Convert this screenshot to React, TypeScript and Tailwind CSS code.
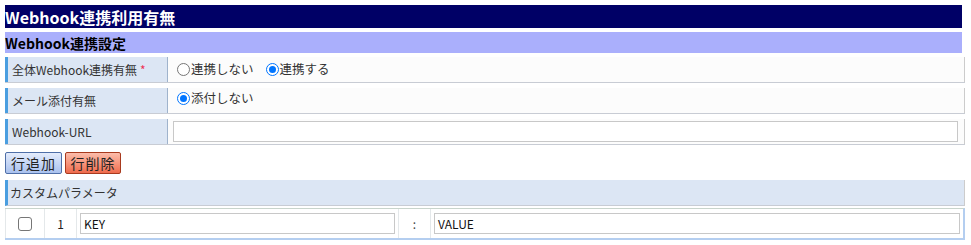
import React from "react";

const font = { fontFamily: '"Noto Sans CJK JP", "Noto Sans", sans-serif' };

function Radio({ checked }: { checked: boolean }) {
  return checked ? (
    <span className="inline-block w-[13px] h-[13px] rounded-full border border-[#0075ff] bg-white relative mr-[1px]">
      <span className="absolute left-[2px] top-[2px] w-[7px] h-[7px] rounded-full bg-[#0075ff]" />
    </span>
  ) : (
    <span className="inline-block w-[13px] h-[13px] rounded-full border border-[#767676] bg-white mr-[1px]" />
  );
}

function Label({ children }: { children: React.ReactNode }) {
  return (
    <div className="w-[163px] shrink-0 bg-[#dce6f4] border-l-[3px] border-l-[#4a9ee0] border-r border-r-[#9fb3cc] flex items-center pl-[4px] text-[12px] text-[#333]">
      {children}
    </div>
  );
}

export default function App() {
  return (
    <div className="w-[971px] h-[245px] bg-white pt-[5px] pl-[5px] text-[12px] leading-none" style={font}>
      <div className="w-[957px] h-[23px] bg-[#000066] text-white font-bold text-[16px] flex items-center">
        Webhook連携利用有無
      </div>
      <div className="w-[957px] h-[21px] mt-[4px] bg-[#aaaffc] text-black font-bold text-[14px] flex items-center">
        Webhook連携設定
      </div>

      <div className="w-[960px] h-[26px] mt-[4px] flex border-b border-b-[#c8ccd4]">
        <Label>
          全体Webhook連携有無<span className="text-[#ee3355] ml-[3px]">*</span>
        </Label>
        <div className="flex-1 bg-[#fcfcfc] border-r border-r-[#cccccc] flex items-center pl-[9px] text-[12.5px] text-[#333]">
          <span className="flex items-center"><Radio checked={false} />連携しない</span>
          <span className="flex items-center ml-[12px]"><Radio checked={true} />連携する</span>
        </div>
      </div>

      <div className="w-[960px] h-[26px] mt-[5px] flex border-b border-b-[#c8ccd4]">
        <Label>メール添付有無</Label>
        <div className="flex-1 bg-[#fcfcfc] border-r border-r-[#cccccc] flex items-start pt-[4px] pl-[9px] text-[12.5px] text-[#333]">
          <span className="flex items-center"><Radio checked={true} />添付しない</span>
        </div>
      </div>

      <div className="w-[960px] h-[26px] mt-[5px] flex border-b border-b-[#c8ccd4]">
        <Label>Webhook-URL</Label>
        <div className="flex-1 bg-[#fcfcfc] border-r border-r-[#cccccc] flex items-center pl-[5px] pr-[6px]">
          <div className="w-full h-[21px] bg-white border border-[#c8c8c8]" />
        </div>
      </div>

      <div className="flex mt-[7px] gap-[3px]">
        <div className="w-[57px] h-[22px] rounded-[2px] border border-[#4f6fa8] bg-gradient-to-b from-[#e4ecfc] to-[#a9c1ee] flex items-center justify-center text-[14px] text-[#222] tracking-[1px]">
          行追加
        </div>
        <div className="w-[56px] h-[22px] rounded-[2px] border border-[#a83a1e] bg-gradient-to-b from-[#fbbcaa] to-[#ee6a4c] flex items-center justify-center text-[14px] text-[#222] tracking-[1px]">
          行削除
        </div>
      </div>

      <div className="w-[960px] h-[26px] mt-[6px] bg-[#dce6f4] border-l-[3px] border-l-[#4a9ee0] border-r border-r-[#cccccc] border-b border-b-[#c8ccd4] flex items-center pl-[2px] text-[12px] text-[#333]">
        カスタムパラメータ
      </div>

      <div className="w-[960px] h-[32px] mt-[2px] flex border-t border-t-[#c8d4cc] border-r-2 border-r-[#b4cef0] border-b-2 border-b-[#b4cef0] bg-white">
        <div className="w-[40px] border-l border-l-[#e4e8ea] border-r border-r-[#e4e8ea] flex items-center justify-center">
          <span className="inline-block w-[14px] h-[14px] rounded-[3px] border border-[#767676] bg-white" />
        </div>
        <div className="w-[32px] border-r border-r-[#e4e8ea] flex items-center justify-center text-[#222]">1</div>
        <div className="w-[322px] border-r border-r-[#e4e8ea] flex items-center pl-[3px] pr-[3px]">
          <div className="w-full h-[21px] bg-white border border-[#c8c8c8] flex items-center pl-[3px] text-[#111]">KEY</div>
        </div>
        <div className="w-[32px] border-r border-r-[#e4e8ea] flex items-center justify-center text-[#444]">:</div>
        <div className="flex-1 flex items-center pl-[3px] pr-[3px]">
          <div className="w-full h-[21px] bg-white border border-[#c8c8c8] flex items-center pl-[3px] text-[#111]">VALUE</div>
        </div>
      </div>
    </div>
  );
}
